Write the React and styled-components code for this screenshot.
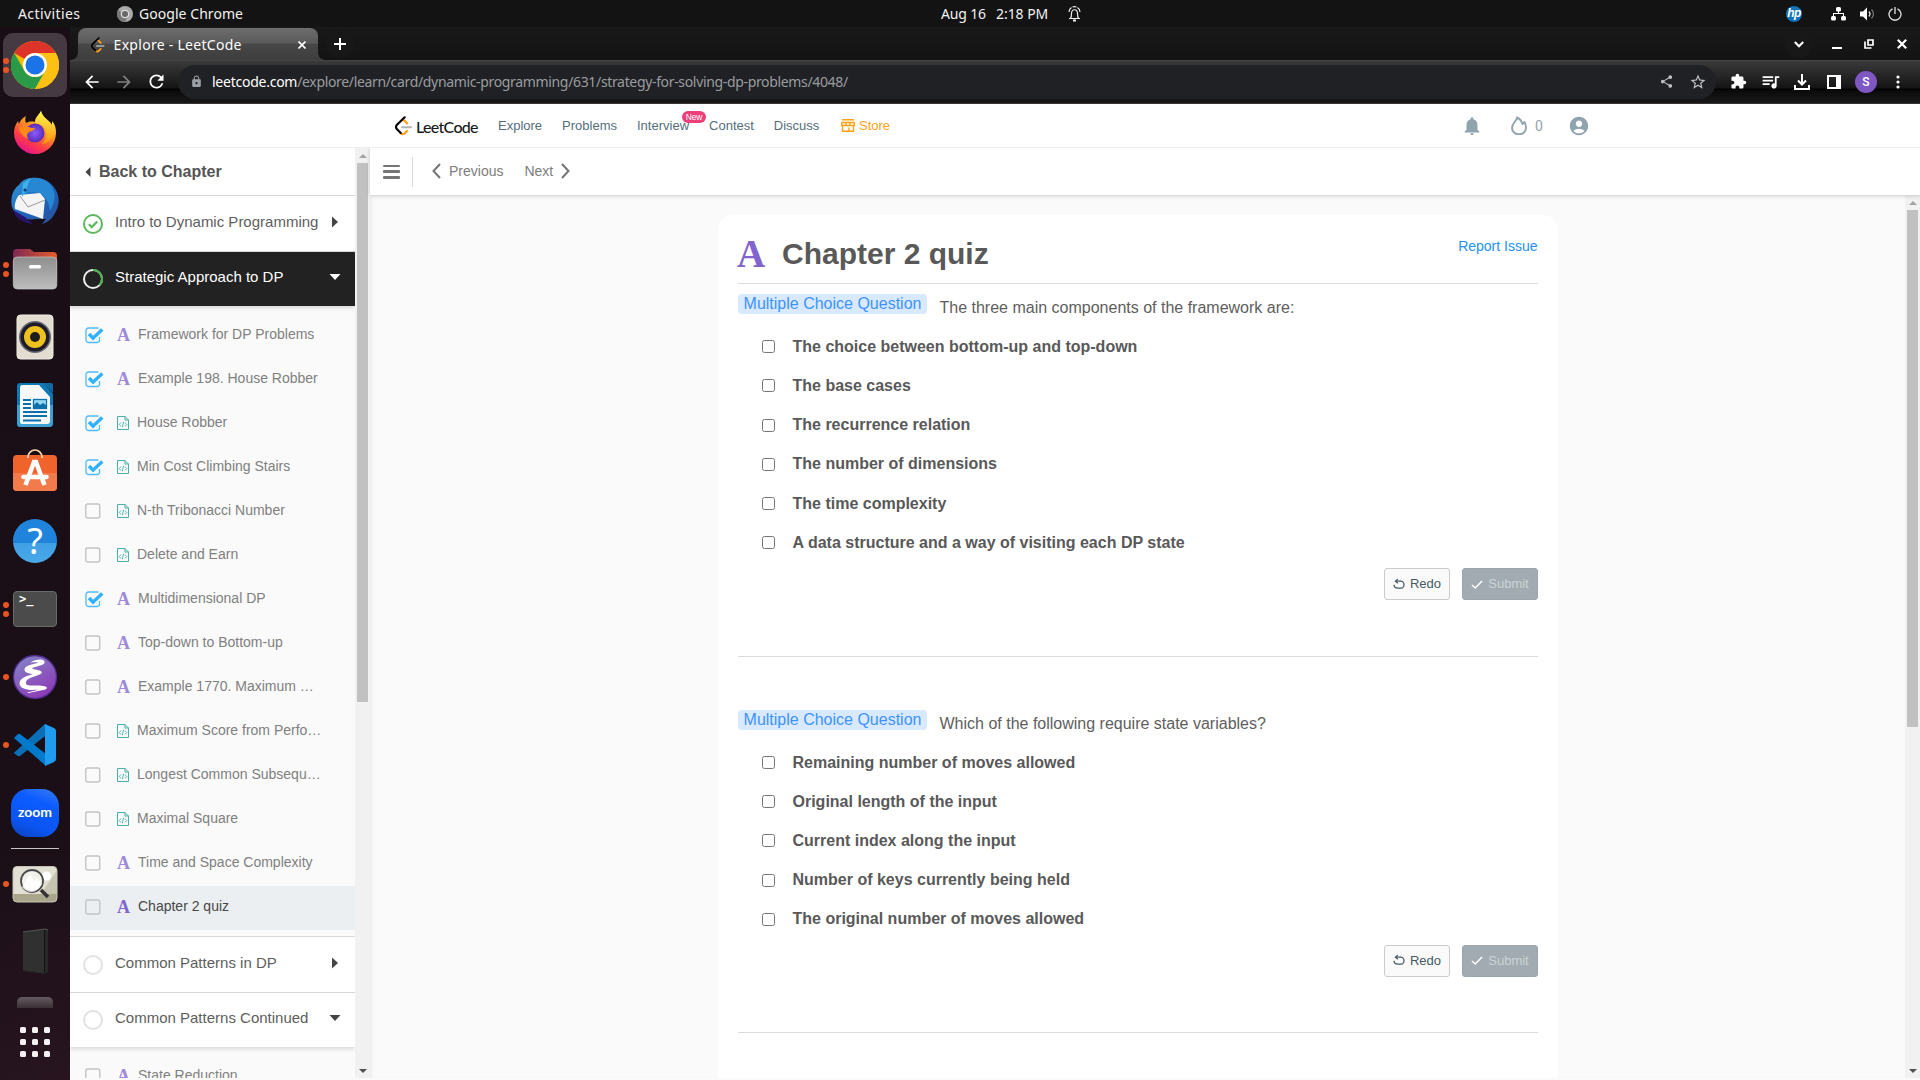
import React from "react";
import styled, { createGlobalStyle, css } from "styled-components";
import {
  MdArrowBack, MdArrowForward, MdRefresh, MdLock, MdShare, MdStarBorder, MdExtension,
  MdQueueMusic, MdNotifications, MdAccountCircle,
} from "react-icons/md";

const GlobalStyle = createGlobalStyle`
  *, *::before, *::after { box-sizing: border-box; }
  body { margin: 0; overflow: hidden; background: #fafafa; font-family: "Liberation Sans", Arial, sans-serif; }
  svg { display: block; flex: none; }
`;

const systemFont = css`font-family: "Noto Sans", "Open Sans", sans-serif;`;

const Desktop = styled.div`
  width: 1920px; height: 1080px; overflow: hidden;
  display: grid; grid-template: 27px 1053px / 70px 1850px;
`;

/* ---------- system bar ---------- */
const SystemBar = styled.header`
  grid-column: 1 / 3; background: #131313; color: #f2f2f2;
  display: grid; grid-template-columns: 941px 1fr auto; align-items: center;
  ${systemFont} font-size: 14px; line-height: 27px; white-space: pre;
`;
const BarGroup = styled.div`
  display: flex; align-items: center; height: 27px;
  padding-left: ${(p) => p.$left || 0}px; padding-right: ${(p) => p.$right || 0}px;
`;
const BarText = styled.span`
  letter-spacing: ${(p) => p.$track || 0}px; width: ${(p) => p.$w}px; margin-right: ${(p) => p.$gap || 0}px;
`;
const IconSlot = styled.span`
  display: flex; justify-content: center; align-items: center; flex: none; margin-left: ${(p) => p.$ml || 0}px;
  width: ${(p) => p.$w}px; height: ${(p) => p.$h || 24}px; color: ${(p) => p.$c || "inherit"};
`;

/* ---------- dock ---------- */
const Dock = styled.nav`
  background: linear-gradient(160deg, #190e15 0%, #1a0f16 75%, #27141f 100%);
  display: flex; flex-direction: column; align-items: center; padding-top: 6px; gap: 4px;
`;
const DockItem = styled.div`
  position: relative; width: 64px; height: 64px; flex: none; border-radius: 10px;
  display: flex; align-items: center; justify-content: center;
  background: ${(p) => (p.$active ? "#453a41" : "transparent")};
`;
const Dots = styled.span`
  position: absolute; left: 0; top: 0; height: 64px; width: 6px;
  display: flex; flex-direction: column; justify-content: center; gap: 3px;
`;
const Dot = styled.i`width: 6px; height: 6px; border-radius: 50%; background: #e95420;`;
const DockRule = styled.div`width: 48px; height: 1px; margin: -1px 0 -1px; background: #c9c6c8; flex: none;`;
const DockPeek = styled.div`
  width: 36px; height: 11px; margin-top: 9px; border-radius: 5px 5px 0 0; flex: none;
  background: linear-gradient(#645b61, #3a3036);
`;
const AppGrid = styled.div`
  margin-top: 15px; display: grid; grid-template-columns: repeat(3, 6px); gap: 6px;
`;
const AppCell = styled.i`width: 6px; height: 6px; border-radius: 1.5px; background: #f3f1f2;`;

/* ---------- browser chrome ---------- */
const Browser = styled.div`display: flex; flex-direction: column; min-width: 0;`;
const TabStrip = styled.div`
  height: 33px; background: linear-gradient(#191919, #131313); flex: none;
  display: flex; align-items: flex-end; padding-left: 8px; color: #fff; ${systemFont}
`;
const Tab = styled.div`
  position: relative; width: 240px; height: 32px; border-radius: 8px 8px 0 0; padding: 0 12px 0 13px;
  background: linear-gradient(#6c6c6c, #5a5a5a 45%, #474747 50%, #3d3d3d);
  display: flex; align-items: center; font-size: 14px; border-top: 1px solid #6e6e6e;
  &::before, &::after {
    content: ""; position: absolute; bottom: 0; width: 7px; height: 7px;
  }
  &::before { left: -7px; background: radial-gradient(circle at 0 0, transparent 6.5px, #3d3d3d 7px); }
  &::after { right: -7px; background: radial-gradient(circle at 100% 0, transparent 6.5px, #3d3d3d 7px); }
`;
const TabTitle = styled.span`flex: 1; margin-left: 9px; letter-spacing: 0.28px; white-space: nowrap; padding-bottom: 1px;`;
const NewTab = styled.div`
  width: 28px; height: 28px; border-radius: 50%; background: #181818; margin: 0 0 2px 8px;
  display: flex; align-items: center; justify-content: center;
`;
const WindowButtons = styled.div`margin-left: auto; display: flex; align-items: center; height: 32px;`;
const Round = styled.span`width: 28px; height: 28px; border-radius: 50%; background: #181818; display: flex; align-items: center; justify-content: center; margin-right: 7px;`;

const Toolbar = styled.div`
  height: 44px; flex: none; display: flex; align-items: center; padding: 0 6px 1px 6px; color: #fff;
  border-top: 1px solid #444; border-bottom: 1px solid #383434;
  background: linear-gradient(#3a3a3a 0, #141414 27px, #000 28px, #0b0b0b 30px, #191919 100%);
`;
const UrlBar = styled.div`
  width: 1538px; height: 34px; border-radius: 17px; background: #202124; margin-left: 6px;
  display: flex; align-items: center; padding: 0 2px 0 12px; margin-right: 6px;
  ${systemFont} font-size: 14px; color: #9a9da0; white-space: nowrap;
`;
const Url = styled.span`flex: 1; margin-left: 9px; letter-spacing: -0.34px;`;
const UrlHost = styled.span`color: #fff; letter-spacing: -0.25px;`;
const Avatar = styled.span`
  width: 22px; height: 22px; border-radius: 50%; background: #7e57c2; color: #fff;
  font: 500 12px/22px Roboto, sans-serif; text-align: center;
`;

/* ---------- site header ---------- */
const SiteHeader = styled.div`
  height: 44px; flex: none; background: #fff; border-bottom: 1px solid #ededed;
  display: flex; align-items: center; padding-left: 325px; font-size: 13px; color: #546e7a;
`;
const Wordmark = styled.span`
  font: 500 16px/20px Lato, sans-serif; color: #1a1a1a; letter-spacing: -0.7px; width: 61px; margin: 2px 21px 0 4px;
`;
const SiteLink = styled.a`
  position: relative; margin-right: ${(p) => (p.$gap ?? 20)}px; line-height: 20px; margin-top: 1px;
  color: ${(p) => p.$c || "inherit"};
`;
const NewBadge = styled.b`
  position: absolute; right: -17px; top: -5px; width: 24px; height: 12px; border-radius: 6px; background: #ec407a;
  color: #fff; font: 8.500px/12px "Liberation Sans", sans-serif; text-align: center; letter-spacing: -0.2px;
`;
const HeaderActions = styled.div`margin-left: 564px; display: flex; align-items: center; color: #90a4ae; font: 14px Roboto, sans-serif;`;

/* ---------- page body ---------- */
const Body = styled.div`height: 930px; flex: none; display: flex; overflow: hidden;`;
const Sidebar = styled.aside`width: 285px; background: #fafafa; overflow: hidden; flex: none;`;
const BackLink = styled.div`
  height: 48px; background: #fff; border-bottom: 1px solid #d9d9d9; display: flex; align-items: center;
  padding-left: 15px; gap: 8px; font-weight: bold; font-size: 16px; color: #555;
`;
const Chapter = styled.div`
  height: ${(p) => p.$h || 56}px; padding: 0 0 ${(p) => p.$pb || 0}px 13px; display: flex; align-items: center; font-size: 15px;
  background: ${(p) => (p.$dark ? "#222" : "#fff")}; color: ${(p) => (p.$dark ? "#fff" : "#5e5e5e")};
  border-bottom: ${(p) => (p.$line ? "1px solid #dadada" : "0")};
  border-top: ${(p) => (p.$top ? "1px solid #dadada" : "0")};
  box-shadow: ${(p) => (p.$open ? "0 2px 4px rgba(0,0,0,.14)" : "none")}; position: relative;
`;
const ChapterName = styled.span`width: 210px; margin: 0 0 5px 12px; white-space: nowrap;`;
const ChapterArrow = styled.span`width: 20px; display: flex; justify-content: center; margin-bottom: 4px;`;
const Lessons = styled.div`padding: 8px 0 6px; display: flex; flex-direction: column;`;
const Lesson = styled.div`
  height: 44px; padding: 0 0 2px 15px; display: flex; align-items: center; font-size: 14px; position: relative;
  color: ${(p) => (p.$current ? "#484848" : "#808080")};
  background: ${(p) => (p.$current ? "#ebeff1" : "transparent")};
`;
const LetterA = styled.span`
  font: bold ${(p) => p.$s}px/1 "Liberation Serif", serif; color: #8264cf; opacity: ${(p) => p.$o || 1};
`;
const KindSlot = styled.span`width: ${(p) => (p.$code ? 20 : 21)}px; margin: 0 0 1px 13px; display: flex; align-items: center; height: 20px;`;
const LessonName = styled.span`max-width: 188px; white-space: nowrap; overflow: hidden; text-overflow: ellipsis; line-height: 20px; margin-bottom: 2px;`;

const ScrollTrack = styled.div`
  width: 15px; flex: none; background: #f1f1f1; display: flex; flex-direction: column; align-items: center;
`;
const ScrollArrow = styled.i`
  height: 15px; width: 15px; display: flex; align-items: center; justify-content: center; flex: none;
  &::after {
    content: ""; border: 4px solid transparent; border-width: ${(p) => (p.$down ? "4px 4px 0" : "0 4px 4px")};
    border-${(p) => (p.$down ? "top" : "bottom")}-color: ${(p) => (p.$down ? "#505050" : "#a3a3a3")};
  }
`;
const ScrollThumb = styled.i`width: 11px; height: ${(p) => p.$h}px; background: #c1c1c1; margin-bottom: auto;`;

const Main = styled.main`flex: 1; display: flex; flex-direction: column; min-width: 0; box-shadow: inset 3px 0 4px -2px rgba(0,0,0,.08);`;
const LessonNav = styled.div`
  height: 47px; flex: none; background: #fff; box-shadow: 0 1px 4px rgba(0,0,0,.18); position: relative;
  display: flex; align-items: center; padding: 0 0 2px 13px; font-size: 14px; color: #7d7d7d;
`;
const Burger = styled.span`
  width: 17px; height: 14px; margin-top: 2px; display: flex; flex-direction: column; justify-content: space-between;
  i { height: 2.6px; background: #757575; border-radius: 1px; }
`;
const Divider = styled.i`width: 1px; height: 30px; background: #d9d9d9; margin: 3px 19px 0 12px;`;
const NavText = styled.span`margin: 0 ${(p) => p.$r}px 0 ${(p) => p.$l}px;`;
const Scroller = styled.div`flex: 1; display: flex; min-height: 0;`;
const Canvas = styled.div`flex: 1; overflow: hidden; padding: 20px 0 0 348px;`;
const Card = styled.section`
  width: 840px; height: 880px; background: #fff; border-radius: 15px 15px 0 0; padding: 0 20px;
`;
const CardHead = styled.div`
  height: 69px; border-bottom: 1px solid #dbdbdb; display: flex; align-items: flex-start; padding-top: 16px;
`;
const TitleMark = styled.span`width: 45px; margin: 3px 0 0 -1px;`;
const Title = styled.h1`margin: 5px 0 0; font-size: 30px; line-height: 36px; font-weight: bold; color: #595959; flex: 1;`;
const Report = styled.a`font-size: 14px; line-height: 20px; color: #2491f7; margin: 5px 0.5px 0 0;`;
const Question = styled.div`padding-top: ${(p) => p.$pt}px; border-bottom: 1px solid #dbdbdb; padding-bottom: ${(p) => p.$pb}px;`;
const Prompt = styled.div`display: flex; height: 33px; align-items: flex-start; font-size: 16px; color: #5e5e5e;`;
const Kind = styled.span`
  background: #d9e9ff; color: #3d94ff; border-radius: 4px; height: 20px; line-height: 19px; width: 189px; text-align: center;
`;
const PromptText = styled.span`margin: 4px 0 0 12.5px; line-height: 20px;`;
const Option = styled.label`
  display: flex; align-items: center; height: 39.2px; padding-left: 24px; font-size: 16px; font-weight: bold; color: #595959;
  input { width: 13px; height: 13px; margin: 0 17.5px 0 0; }
`;
const Actions = styled.div`display: flex; justify-content: flex-end; gap: 12px; margin-top: 6px;`;
const Button = styled.button`
  height: 32px; width: ${(p) => (p.$solid ? 76 : 66)}px; border-radius: 3px; padding: 0 0 1px; font: 13px "Liberation Sans", sans-serif;
  display: flex; align-items: center; justify-content: center; gap: 5px;
  border: 1px solid ${(p) => (p.$solid ? "#9aa5ab" : "#ccc")};
  background: ${(p) => (p.$solid ? "#a1abb1" : "#fafafa")}; color: ${(p) => (p.$solid ? "#ccd3d6" : "#455a64")};
`;

/* ---------- icons ---------- */
const LeetLogo = ({ h, base = "#000" }) => (
  <svg width={h * 0.85} height={h} viewBox="0 0 95 111" fill="none" strokeLinecap="round">
    <path d="M68 83l-12 12c-7 7-18 7-25 0M68 41L56 28c-4-4-10-7-16-5" stroke="#ffa116" strokeWidth="12" />
    <path d="M32 95L11 74c-7-7-7-18 0-25L54 7" stroke={base} strokeWidth="12" />
    <path d="M40 62h49" stroke="#b3b3b3" strokeWidth="11" />
  </svg>
);
const Chevron = ({ right }) => (
  <svg width="9" height="16" viewBox="0 0 9 16" fill="none" stroke="#757575" strokeWidth="2">
    <path d={right ? "M1 1l6.5 7L1 15" : "M8 1L1.500 8 8 15"} />
  </svg>
);
const CheckBoxIcon = ({ on }) => (
  <svg width="19" height="18" viewBox="0 0 19 18" fill="none">
    {on ? (
      <>
        <path d="M13.500 2H3.500a2.500 2.500 0 00-2.500 2.500v9.500a2.500 2.500 0 002.500 2.500h8.500a2.500 2.500 0 002.500-2.500v-3" stroke="#4dbcfb" strokeWidth="1.300" />
        <path d="M4 8l4 4.200L17.300 3.500" stroke="#33b1fa" strokeWidth="3.400" />
      </>
    ) : (
      <rect x=".75" y="2" width="14" height="14" rx="2" stroke="#c4c4c4" strokeWidth="1.400" />
    )}
  </svg>
);
const CodeFile = () => (
  <svg width="12" height="14" viewBox="0 0 12 14" fill="none" stroke="#45b0a5" strokeWidth="1">
    <path d="M.5.5h7.500L11.500 4v9.500H.5zM8 .5V4h3.500" />
    <path d="M4 6.500L2.300 8.500 4 10.500M8 6.500l1.700 2L8 10.500M6.600 5.800l-1.200 5.400" strokeWidth=".9" />
  </svg>
);
const Progress = ({ state }) => (
  <svg width="20" height="20" viewBox="0 0 20 20" fill="none">
    <circle cx="10" cy="10" r="9" stroke={state === "done" ? "#5cb85c" : state === "part" ? "#eee" : "#e2e2e2"} strokeWidth="2" />
    {state === "part" && <path d="M10 1a9 9 0 016.400 15.300" stroke="#4caf50" strokeWidth="2" />}
    {state === "done" && <path d="M5.800 10.200l3 2.900 5.500-5.600" stroke="#5cb85c" strokeWidth="2.200" />}
  </svg>
);
const Triangle = ({ down, left, c = "#444" }) => {
  if (left) return <svg width="6" height="10" viewBox="0 0 6 10"><path d="M5.500 0v10L.5 5z" fill={c} /></svg>;
  return down
    ? <svg width="12" height="6" viewBox="0 0 12 6"><path d="M.5 0h11L6 6z" fill={c} /></svg>
    : <svg width="6" height="12" viewBox="0 0 6 12"><path d="M0 .5v11L6 6z" fill={c} /></svg>;
};

const DockSvg = ({ children }) => <svg width="48" height="48" viewBox="0 0 48 48">{children}</svg>;

const ChromeIcon = () => (
  <DockSvg>
    <circle cx="24" cy="24" r="24" fill="#fbbc05" />
    <path d="M3.200 12A24 24 0 0144.800 12H24A12 12 0 0013.600 18z" fill="#dd3429" />
    <path d="M3.200 12A24 24 0 0024 48l10.400-18A12 12 0 0113.600 30z" fill="#2b9a48" />
    <path d="M24 12h20.800A24 24 0 0124 48l10.400-18A12 12 0 0024 12z" fill="#fdc113" />
    <circle cx="24" cy="24" r="12" fill="#fff" />
    <circle cx="24" cy="24" r="9.500" fill="#1a73e8" />
  </DockSvg>
);
const FirefoxIcon = () => (
  <DockSvg>
    <defs>
      <linearGradient id="ffa" x1=".8" y1=".1" x2=".3" y2="1">
        <stop offset="0" stopColor="#fff44f" /><stop offset=".35" stopColor="#ff9a1f" /><stop offset=".7" stopColor="#ff3d47" /><stop offset="1" stopColor="#e3128c" />
      </linearGradient>
      <radialGradient id="ffb"><stop offset="0" stopColor="#8d5cff" /><stop offset="1" stopColor="#5b2bb5" /></radialGradient>
      <linearGradient id="ffc" x2="0" y2="1"><stop offset="0" stopColor="#fff44f" /><stop offset="1" stopColor="#ff980e" /></linearGradient>
    </defs>
    <path d="M30 2c-2 4-6 6-6 11-4-1-7 0-9 1-1-2-1-5 0-7-4 2-6 5-7 8l-1-3c-3 4-4 8-4 12a21 21 0 0042 0c0-5-1-9-4-12v4C39 11 31 9 30 2z" fill="url(#ffa)" />
    <circle cx="24" cy="24" r="9.500" fill="url(#ffb)" />
    <path d="M30 2c-2 4-6 7-6 12 6 0 10 4 11 9 1 5-1 9-4 12 7-1 12-6 12-13 0-8-11-12-13-20z" fill="url(#ffc)" opacity=".9" />
    <path d="M8 19c4-2 9-2 12 0h4c-1 3-4 3-6 4-2 2-3 4 0 7-4-1-9-5-10-11z" fill="#ff8a16" />
  </DockSvg>
);
const ThunderbirdIcon = () => (
  <DockSvg>
    <defs><linearGradient id="tb" x2="1" y2="1"><stop offset="0" stopColor="#2f9be0" /><stop offset=".5" stopColor="#1d66b8" /><stop offset="1" stopColor="#2a4f9e" /></linearGradient></defs>
    <path d="M13 3C21-1 34 0 41 8c8 8 8 19 4 26-2 5-6 11-14 13l4-5H25C14 44 4 39 1 30-1 21 2 12 8 8c1-2 3-4 5-5z" fill="url(#tb)" />
    <path d="M16 2c9-3 20 0 25 8 4 7 3 16-2 24-1-11-7-18-16-19-7-1-10 3-12 6-1-8 0-14 5-19z" fill="#2787d2" />
    <path d="M8 18L29 16l5 6-2 20L4 32c-1-5 1-10 4-14z" fill="#f4f4f5" />
    <path d="M9 19l8 11 17-7" fill="none" stroke="#999" />
    <path d="M12 6l8-5c-4 6-4 13-9 19z" fill="#3fb0ea" />
    <circle cx="14" cy="13" r="1.500" fill="#123b6f" />
    <path d="M2 33l12 7 8 7C12 46 4 41 2 33z" fill="#29146b" />
  </DockSvg>
);
const FilesIcon = () => (
  <DockSvg>
    <defs>
      <linearGradient id="fa"><stop offset="0" stopColor="#7c2953" /><stop offset="1" stopColor="#e95b2a" /></linearGradient>
      <linearGradient id="fb" x2="0" y2="1"><stop offset="0" stopColor="#8e8e8e" /><stop offset="1" stopColor="#bdbdbd" /></linearGradient>
    </defs>
    <path d="M2 8q0-4 4-4h13l4 3h19q4 0 4 4v25H2z" fill="url(#fa)" />
    <rect x="2.300" y="12" width="43.500" height="32" rx="4" fill="url(#fb)" stroke="#c7c7c7" strokeWidth=".7" />
    <rect x="18" y="20" width="12" height="3.500" rx="1.500" fill="#fff" />
  </DockSvg>
);
const MusicIcon = () => (
  <DockSvg>
    <rect x="6" y="2" width="36" height="44" rx="3.500" fill="#e2ddd0" stroke="#f1eee6" />
    <circle cx="24" cy="24" r="16" fill="#686b73" /><circle cx="24" cy="24" r="14.500" fill="#1e1c29" />
    <circle cx="24" cy="24" r="11" fill="#edc21e" /><circle cx="24" cy="24" r="5" fill="#1d1d1d" />
  </DockSvg>
);
const WriterIcon = () => (
  <DockSvg>
    <path d="M9 2h24l9 11v29q0 4-4 4H9q-3 0-3-4V5q0-3 3-3z" fill="#0d78b5" /><path d="M6 24h36v18q0 4-4 4H9q-3 0-3-4z" fill="#3ca0d4" />
    <path d="M11 4h17l11 12v24q0 3-3 3H11q-2 0-2-3V7q0-3 2-3z" fill="#f6f8fa" />
    <path d="M32 2h8q2 0 2 2v8z" fill="#116a9f" />
    <path d="M12 19h8M12 23h8M12 27h8M12 31h24M12 35h24M12 39.500h18" stroke="#0b70ac" strokeWidth="2" />
    <rect x="22.500" y="18.500" width="13" height="9" fill="#98d7f4" stroke="#0b70ac" strokeWidth="1.300" /><path d="M23 27v-3l3-3 3 3 3-2 3 2v3z" fill="#0b70ac" />
  </DockSvg>
);
const SoftwareIcon = () => (
  <DockSvg>
    <rect x="2" y="6" width="44" height="36" rx="4" fill="#f0632b" /><path d="M2 24h44v14q0 4-4 4H6q-4 0-4-4z" fill="#f17b4b" />
    <path d="M17 9V8a7 7 0 0114 0v1" fill="none" stroke="#f8d8a6" strokeWidth="1.700" />
    <g stroke="#fff" fill="none"><path d="M14.500 36L23 13h2l8.500 23" strokeWidth="4.500" /><path d="M12.500 28h23" strokeWidth="4.500" strokeLinecap="round" /></g>
  </DockSvg>
);
const HelpGlyph = styled.span`
  width: 44px; height: 44px; border-radius: 50%; background: linear-gradient(#2184dc, #2184dc 54%, #40a0e4 55%, #48a8e9);
  color: #fff; font: 36px/43px "Noto Sans", sans-serif; text-align: center;
`;
const TerminalGlyph = styled.span`
  width: 44px; height: 36px; border-radius: 4px; background: #4b4b4b; border: 1px solid #686c68; color: #fff;
  font: bold 12px/15px "DejaVu Sans Mono", monospace; padding-left: 5px; display: flex;
`;
const EmacsIcon = () => (
  <DockSvg>
    <defs><linearGradient id="em" x1=".2" x2=".8" y2="1"><stop offset="0" stopColor="#8382c6" /><stop offset="1" stopColor="#8f35b5" /></linearGradient></defs>
    <circle cx="24" cy="24" r="21.500" fill="url(#em)" stroke="#4d2a8b" strokeWidth="1.300" />
    <path d="M19.500 9.500C24 6 32 5.500 33.500 8.500c1 3-4 4-8.500 5.200-5 1.300-5 1.800-1 2.800 4 .8 9 2 6 4.300-3 2-12 3.700-14.500 7-2 3.500 1 5 6 4.800s14.500 0 14.500 2.400-11 2.800-18 5c-2 .4-2-.5 0-1s7-1.500 9-2.500C18 38 8.500 36 8.500 30.500s8-8 13.500-9.200c-4-1-8.500-1.500-8.500-4.800s6-5 11-6c4-.8 3-1.500-5-1z" fill="#fff" />
  </DockSvg>
);
const CodeEditorIcon = () => (
  <DockSvg>
    <path d="M3 32l4 3L34 14V3z" fill="#0065a9" /><path d="M3 32l4 3q1 .7 2 0L34 15V3z" fill="#0a6fb4" />
    <path d="M7 13q1-.7 2 0l26 20v12L3 17z" fill="#007acc" />
    <path d="M34 3l9 4q2 1 2 3v28q0 2-2 3l-9 4z" fill="#1f9cf0" />
  </DockSvg>
);
const ZoomTile = styled.span`
  width: 48px; height: 48px; border-radius: 17px; background: linear-gradient(200deg, #3b7bf2 0, #0b5cff 30%, #0b55f2 70%, #0a42bd);
  color: #fff; font: bold 14px/46px Lato, sans-serif; text-align: center;
`;
const ViewerIcon = () => (
  <DockSvg>
    <rect x="2" y="6.500" width="44" height="35.500" rx="4" fill="#e2e0d3" stroke="#c4c2b4" />
    <path d="M46 10L30 34H2.500v5q0 3 4 3H42q4 0 4-4z" fill="#c7c4b2" /><path d="M2.500 34h43v4q0 3.500-4 3.500H6q-3.500 0-3.500-3.500z" fill="#aaa58d" />
    <circle cx="35.500" cy="16" r="4.500" fill="#fff" /><circle cx="21" cy="21" r="11" fill="#f5f5f1" fillOpacity=".85" stroke="#4b4b4b" strokeWidth="1.800" />
    <path d="M11 27l8-13 4 7 3-3 5 6q-5 8-10 8-6 0-10-5z" fill="#fff" opacity=".8" />
    <path d="M30 30l7 7" stroke="#333" strokeWidth="3.500" />
  </DockSvg>
);
const DriveIcon = () => (
  <DockSvg>
    <path d="M12 4L34 1l3 1v42l-3 2-22-3z" fill="#282828" /><path d="M12 4L33 1.500V45l-21-3z" fill="#303030" /><path d="M33.500 2v43" stroke="#111" />
    <path d="M12 4L34 1l3 1" fill="none" stroke="#555" />
  </DockSvg>
);
const Help = () => <HelpGlyph>?</HelpGlyph>;
const Terminal = () => <TerminalGlyph>&gt;_</TerminalGlyph>;
const ZoomApp = () => <ZoomTile>zoom</ZoomTile>;

const dockTop = [
  [ChromeIcon, 2, true], [FirefoxIcon, 0], [ThunderbirdIcon, 0], [FilesIcon, 2], [MusicIcon, 0], [WriterIcon, 0],
  [SoftwareIcon, 0], [Help, 0], [Terminal, 2], [EmacsIcon, 1], [CodeEditorIcon, 1], [ZoomApp, 0],
];
const dockBottom = [[ViewerIcon, 1], [DriveIcon, 0]];

const renderDock = (items) => items.map(([Icon, n, active], i) => (
  <DockItem key={i} $active={active}>
    <Dots>{Array.from({ length: n }, (_, k) => <Dot key={k} />)}</Dots>
    <Icon />
  </DockItem>
));

const lessons = [
  ["Framework for DP Problems", "a", true], ["Example 198. House Robber", "a", true], ["House Robber", "c", true],
  ["Min Cost Climbing Stairs", "c", true], ["N-th Tribonacci Number", "c"], ["Delete and Earn", "c"],
  ["Multidimensional DP", "a", true], ["Top-down to Bottom-up", "a"], ["Example 1770. Maximum …", "a"],
  ["Maximum Score from Perfo…", "c"], ["Longest Common Subsequ…", "c"], ["Maximal Square", "c"],
  ["Time and Space Complexity", "a"], ["Chapter 2 quiz", "a", false, true],
];

const LessonRow = ({ data: [name, kind, done, current] }) => (
  <Lesson $current={current}>
    <IconSlot $w={19} $h={20}><CheckBoxIcon on={done} /></IconSlot>
    <KindSlot $code={kind === "c"}>{kind === "c" ? <CodeFile /> : <LetterA $s={18} $o={current ? 1 : 0.75}>A</LetterA>}</KindSlot>
    <LessonName>{name}</LessonName>
  </Lesson>
);

const RedoIcon = () => (
  <svg width="12" height="12" viewBox="0 0 12 12" fill="none" stroke="#455a64" strokeWidth="1.300">
    <path d="M2.500 3.200H7.500a3.400 3.400 0 010 7H4.500Q1.200 10.200 1 6.800" /><path d="M4.800 1.200L2.500 3.200l2.300 2" />
  </svg>
);
const TickIcon = () => (
  <svg width="12" height="12" viewBox="0 0 12 12" fill="none" stroke="#fff" strokeWidth="1.500"><path d="M1 7L4.300 10l6.700-7" /></svg>
);

const QuizQuestion = ({ text, options, pt, pb }) => (
  <Question $pt={pt} $pb={pb}>
    <Prompt><Kind>Multiple Choice Question</Kind><PromptText>{text}</PromptText></Prompt>
    {options.map((o) => <Option key={o}><input type="checkbox" />{o}</Option>)}
    <Actions>
      <Button><RedoIcon />Redo</Button>
      <Button $solid><TickIcon />Submit</Button>
    </Actions>
  </Question>
);

const first = ["The choice between bottom-up and top-down", "The base cases", "The recurrence relation", "The number of dimensions", "The time complexity", "A data structure and a way of visiting each DP state"];
const second = ["Remaining number of moves allowed", "Original length of the input", "Current index along the input", "Number of keys currently being held", "The original number of moves allowed"];

const HpBadge = styled.span`
  width: 16px; height: 16px; border-radius: 50%; background: #1173b8; color: #fff; font: italic bold 12px/14px "Liberation Sans", sans-serif;
  text-align: center; letter-spacing: -0.5px; margin-right: 15px;
`;

export default function App() {
  return (
    <Desktop>
      <GlobalStyle />
      <SystemBar>
        <BarGroup $left={18}>
          <BarText $w={62} $gap={37} $track={0.4}>Activities</BarText>
          <svg width="16" height="16" viewBox="0 0 16 16"><circle cx="8" cy="8" r="8" fill="#aaa" /><path d="M1 4a8 8 0 007 12l3-6z" fill="#777" /><circle cx="8" cy="8" r="4.300" fill="#ddd" /><circle cx="8" cy="8" r="3" fill="#666" /></svg>
          <IconSlot $w={6} />
          <BarText $w={110} $track={0.05}>Google Chrome</BarText>
        </BarGroup>
        <BarGroup>
          <BarText $w={55} $track={-0.15}>Aug 16</BarText>
          <BarText $w={72} $track={-0.05}>2:18 PM</BarText>
          <svg width="13" height="16" viewBox="0 0 13 16" fill="none" stroke="#eee" strokeWidth="1.200">
            <path d="M1 12.500h11M2.500 12.500q1-1.500 1-5c0-5 6-5 6 0q0 3.500 1 5M1 6q0-3 2.500-4.500M12 6q0-3-2.500-4.500M4.500 1q2-.8 4 0" /><path d="M5 14.500h3" strokeWidth="2" />
          </svg>
        </BarGroup>
        <BarGroup $right={6}>
          <HpBadge>hp</HpBadge>
          <IconSlot $w={43}><svg width="15" height="14" viewBox="0 0 15 14" fill="#fff"><rect x="5" y="0" width="5" height="4.500" rx="1.500" /><rect x="0" y="9" width="5" height="4.500" rx="1.500" /><rect x="10" y="9" width="5" height="4.500" rx="1.500" /><path d="M7 4h1v2h5v3h-1V7H3v2H2V6h5z" /></svg></IconSlot>
          <svg width="15" height="14" viewBox="0 0 15 14"><path d="M0 4.500h3L7 .5v13l-4-4H0z" fill="#fff" /><path d="M9 4.500q2 2.500 0 5" fill="none" stroke="#ddd" strokeWidth="1.300" /><path d="M11.500 2.500q4 4.500 0 9" fill="none" stroke="#777" strokeWidth="1.200" /></svg>
          <IconSlot $w={39}><svg width="14" height="14" viewBox="0 0 14 14" fill="none" stroke="#e4e4e4" strokeWidth="1.300"><path d="M4.500 1.800a6 6 0 105 0M7 0v7" /></svg></IconSlot>
        </BarGroup>
      </SystemBar>

      <Dock>
        {renderDock(dockTop)}
        <DockRule />
        {renderDock(dockBottom)}
        <DockPeek />
        <AppGrid>{Array.from({ length: 9 }, (_, i) => <AppCell key={i} />)}</AppGrid>
      </Dock>

      <Browser>
        <TabStrip>
          <Tab>
            <LeetLogo h={16} />
            <TabTitle>Explore - LeetCode</TabTitle>
            <svg width="8" height="8" viewBox="0 0 8 8" stroke="#fff" strokeWidth="1.600"><path d="M.5.5l7 7M7.500.5l-7 7" /></svg>
          </Tab>
          <NewTab><svg width="12" height="12" viewBox="0 0 12 12" stroke="#fff" strokeWidth="2"><path d="M6 0v12M0 6h12" /></svg></NewTab>
          <WindowButtons>
            <Round><svg width="10" height="7" viewBox="0 0 10 7" fill="none" stroke="#fff" strokeWidth="2"><path d="M.8 1L5 5.300 9.200 1" /></svg></Round>
            <IconSlot $w={34}><svg width="10" height="10" viewBox="0 0 10 10"><path d="M0 9h10" stroke="#fff" strokeWidth="2" /></svg></IconSlot>
            <IconSlot $w={30}><svg width="10" height="10" viewBox="0 0 10 10" fill="none" stroke="#fff" strokeWidth="2"><path d="M4 1h5v5H4zM1 2.500V9h6.500" strokeWidth="1.700" /></svg></IconSlot>
            <IconSlot $w={36}><svg width="10" height="10" viewBox="0 0 10 10" stroke="#fff" strokeWidth="2.200"><path d="M.8.8l8.400 8.400M9.200.8L.8 9.200" /></svg></IconSlot>
          </WindowButtons>
        </TabStrip>
        <Toolbar>
          <IconSlot $w={32}><MdArrowBack size={20} /></IconSlot>
          <IconSlot $w={32} $c="#808080"><MdArrowForward size={20} /></IconSlot>
          <IconSlot $w={32}><MdRefresh size={21} /></IconSlot>
          <UrlBar>
            <MdLock size={13} color="#9aa0a6" />
            <Url><UrlHost>leetcode.com</UrlHost>/explore/learn/card/dynamic-programming/631/strategy-for-solving-dp-problems/4048/</Url>
            <IconSlot $w={32} $c="#bdc1c6"><MdShare size={15} /></IconSlot>
            <IconSlot $w={32} $c="#bdc1c6"><MdStarBorder size={18} /></IconSlot>
          </UrlBar>
          <IconSlot $w={32}><MdExtension size={17} /></IconSlot>
          <IconSlot $w={32}><MdQueueMusic size={21} /></IconSlot>
          <IconSlot $w={32}><svg width="16" height="16" viewBox="0 0 16 16" fill="none" stroke="#fff" strokeWidth="2"><path d="M8 0v10M4 6.500l4 4 4-4M1 11v4h14v-4" /></svg></IconSlot>
          <IconSlot $w={32}><svg width="14" height="14" viewBox="0 0 14 14"><path d="M0 0h14v14H0zM2 2v10h7V2z" fill="#fff" fillRule="evenodd" /></svg></IconSlot>
          <IconSlot $w={32}><Avatar>S</Avatar></IconSlot>
          <IconSlot $w={32}><svg width="4" height="14" viewBox="0 0 4 14" fill="#fff"><circle cx="2" cy="2" r="1.600" /><circle cx="2" cy="7" r="1.600" /><circle cx="2" cy="12" r="1.600" /></svg></IconSlot>
        </Toolbar>

        <SiteHeader>
          <LeetLogo h={20} />
          <Wordmark>LeetCode</Wordmark>
          <SiteLink>Explore</SiteLink>
          <SiteLink>Problems</SiteLink>
          <SiteLink>Interview<NewBadge>New</NewBadge></SiteLink>
          <SiteLink>Contest</SiteLink>
          <SiteLink $gap={22}>Discuss</SiteLink>
          <svg width="14" height="13" viewBox="0 0 14 13" fill="none" stroke="#ffa116" strokeWidth="1.400"><path d="M1 .8h12M.8 3.500h12.400v3H.8zM1.500 6.500v5.700h11V6.500M5 3.500v3M9 3.500v3M8 12V8.500" /></svg>
          <SiteLink $c="#ffa116" $gap={0} as="span">&nbsp;Store</SiteLink>
          <HeaderActions>
            <IconSlot $w={36}><MdNotifications size={22} /></IconSlot>
            <IconSlot $w={32} $ml={13}><svg width="16" height="19" viewBox="0 0 16 19" fill="none" stroke="#90a4ae" strokeWidth="1.900" strokeLinejoin="round"><path d="M6 1.500C6 5 1 7 1 12a7 6.300 0 0014 0c0-3-.8-5-1.500-6L11.500 8C10.500 5 8.500 2.500 6 1.500z" /></svg></IconSlot>
            <span>0</span>
            <IconSlot $w={72}><MdAccountCircle size={22} /></IconSlot>
          </HeaderActions>
        </SiteHeader>

        <Body>
          <Sidebar>
            <BackLink><Triangle left />Back to Chapter</BackLink>
            <Chapter $line><Progress state="done" /><ChapterName>Intro to Dynamic Programming</ChapterName><ChapterArrow><Triangle /></ChapterArrow></Chapter>
            <Chapter $dark $h={54} $open><Progress state="part" /><ChapterName>Strategic Approach to DP</ChapterName><ChapterArrow><Triangle down c="#fff" /></ChapterArrow></Chapter>
            <Lessons>{lessons.map((l) => <LessonRow key={l[0]} data={l} />)}</Lessons>
            <Chapter $top $line $h={57}><Progress /><ChapterName>Common Patterns in DP</ChapterName><ChapterArrow><Triangle /></ChapterArrow></Chapter>
            <Chapter $h={54} $open><Progress /><ChapterName>Common Patterns Continued</ChapterName><ChapterArrow><Triangle down /></ChapterArrow></Chapter>
            <Lessons><LessonRow data={["State Reduction", "a"]} /></Lessons>
          </Sidebar>
          <ScrollTrack><ScrollArrow /><ScrollThumb $h={539} /><ScrollArrow $down /></ScrollTrack>
          <Main>
            <LessonNav>
              <Burger><i /><i /><i /></Burger>
              <Divider />
              <Chevron /><NavText $l={8} $r={21}>Previous</NavText>
              <NavText $l={0} $r={8}>Next</NavText><Chevron right />
            </LessonNav>
            <Scroller>
              <Canvas>
                <Card>
                  <CardHead>
                    <TitleMark><LetterA $s={39}>A</LetterA></TitleMark>
                    <Title>Chapter 2 quiz</Title>
                    <Report>Report Issue</Report>
                  </CardHead>
                  <QuizQuestion pt={10.2} pb={55.6} text="The three main components of the framework are:" options={first} />
                  <QuizQuestion pt={53} pb={55} text="Which of the following require state variables?" options={second} />
                </Card>
              </Canvas>
              <ScrollTrack><ScrollArrow /><ScrollThumb $h={517} /><ScrollArrow $down /></ScrollTrack>
            </Scroller>
          </Main>
        </Body>
      </Browser>
    </Desktop>
  );
}
